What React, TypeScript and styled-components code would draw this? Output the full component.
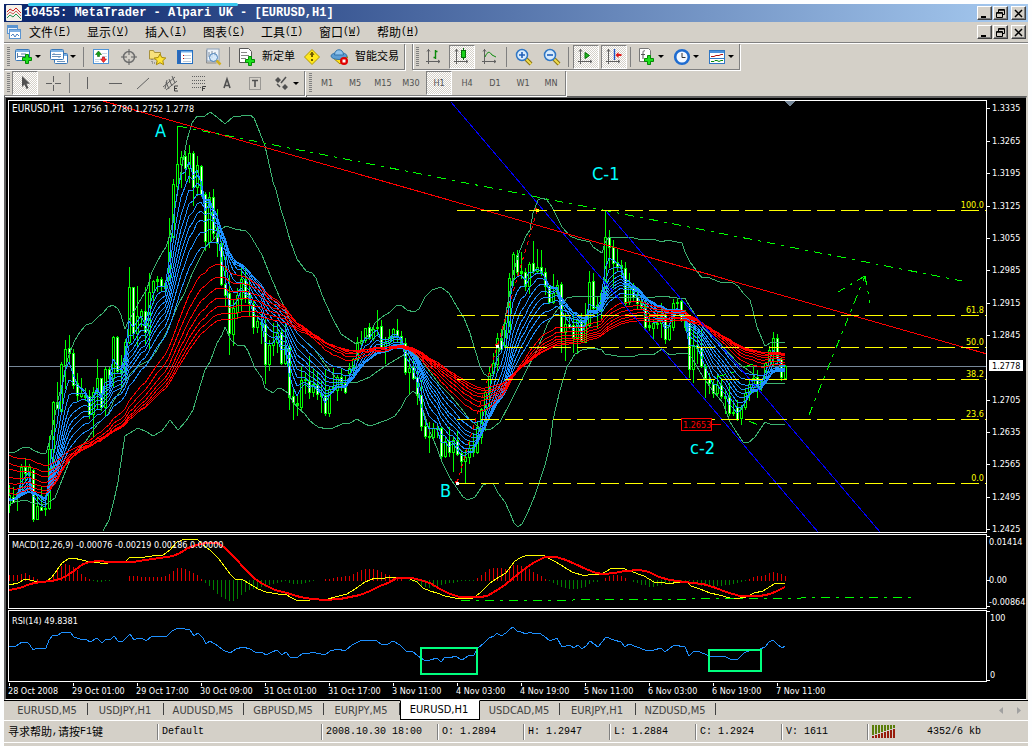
import React from "react";
import styled, { createGlobalStyle, css } from "styled-components";

const FACE = "#d4d0c8";
const SHADOW = "#808080";
const TAHOMA = `"DejaVu Sans Condensed", "DejaVu Sans", sans-serif`;
const SONG = `"Liberation Mono", "Noto Sans CJK SC", monospace`;
const HAN = `"Noto Sans CJK SC", sans-serif`;

const GlobalStyle = createGlobalStyle`
  * { box-sizing: border-box; }
  body { margin: 0; background: #fdfeff; }
  button { font: inherit; color: inherit; border: 0; padding: 0; background: none; }
`;

/* ---------- window furniture ---------- */

const Window = styled.div`
  display: flex;
  flex-direction: column;
  margin: 0 4px;
  padding-top: 4px;
`;

const Body = styled.div`
  background: ${FACE};
  padding-bottom: 3px;
`;

const TitleBar = styled.header`
  display: flex;
  align-items: center;
  height: 18px;
  padding: 0 2px;
  background: linear-gradient(to right, #0a246a, #a6caf0);
  color: #fff;
`;

const Title = styled.h1`
  flex: 1;
  margin: 0 0 0 2px;
  font: bold 12px/18px ${SONG};
  white-space: pre;
`;

const Highlight = styled.div`
  position: absolute;
  top: 3px;
  left: 28px;
  width: 210px;
  height: 3px;
  border-radius: 2px;
  background: #38c8ee;
`;

const MenuBar = styled.nav`
  display: flex;
  align-items: center;
  height: 20px;
  padding: 0 2px;
`;

const MenuList = styled.div`
  display: flex;
  flex: 1;
  gap: 16px;
  margin-left: 7px;
`;

const MenuItem = styled.button`
  display: flex;
  align-items: center;
  width: 42px;
  font: 12px/18px ${HAN};
  white-space: nowrap;
  span { font: 10px/18px ${SONG}; }
`;

const Controls = styled.div`
  display: flex;
  gap: 1px;
`;

const ControlButton = styled.button<{ $apart?: boolean }>`
  display: grid;
  place-items: center;
  width: 15px;
  height: 14px;
  margin-left: ${(p) => (p.$apart ? "2px" : "0")};
  background: ${FACE};
  border: 1px solid;
  border-color: #fff #404040 #404040 #fff;
  box-shadow: inset -1px -1px ${SHADOW};
  color: #000;
`;

/* ---------- toolbars ---------- */

const ToolRow = styled.div<{ $first?: boolean }>`
  display: flex;
  gap: 1px;
  height: ${(p) => (p.$first ? "28px" : "26px")};
  padding-top: 1px;
  ${(p) => p.$first && css`
    border-top: 1px solid ${SHADOW};
    box-shadow: inset 0 1px #fff;
  `}
`;

const ToolBar = styled.div<{ $inset?: boolean }>`
  display: flex;
  align-items: center;
  height: 100%;
  border-right: 1px solid ${SHADOW};
  border-bottom: 1px solid ${SHADOW};
  box-shadow: 1px 1px #fff;
  margin-left: ${(p) => (p.$inset ? "6px" : "0")};
  ${(p) => p.$inset && css`
    border-left: 1px solid ${SHADOW};
    box-shadow: 1px 1px #fff, inset 1px 0 #fff;
  `}
`;

const Grip = styled.i`
  width: 7px;
  height: 20px;
  padding: 0 1px 0 3px;
  background: repeating-linear-gradient(to bottom, ${SHADOW} 0 1px, ${FACE} 1px 2px) content-box;
`;

const Divider = styled.i`
  width: 6px;
  height: 20px;
  padding: 0 3px 0 2px;
  background: ${SHADOW} content-box;
`;

const ToolButton = styled.button<{ $pressed?: boolean }>`
  display: grid;
  place-items: center;
  width: 26px;
  height: 24px;
  margin: 0 1px;
  font: 9px/12px ${TAHOMA};
  color: #505050;
  border: 1px solid transparent;
  ${(p) => p.$pressed && css`
    border-color: ${SHADOW} #fff #fff ${SHADOW};
    background: repeating-conic-gradient(#fff 0 25%, ${FACE} 0 50%) 0 0 / 2px 2px;
  `}
`;

const DropButton = styled.button`
  display: flex;
  align-items: center;
  width: 35px;
  height: 24px;
  padding-left: 3px;
  &::after {
    content: "";
    margin-left: 1px;
    border: 3px solid transparent;
    border-top-color: #000;
    border-bottom: 0;
  }
`;

const TextButton = styled.button<{ $w: number }>`
  display: flex;
  align-items: center;
  gap: 5px;
  width: ${(p) => p.$w}px;
  height: 24px;
  padding-left: 4px;
  white-space: nowrap;
  span {
    padding-bottom: 3px;
    font: 11px/16px ${HAN};
  }
`;

/* ---------- chart ---------- */

const ChartWindow = styled.main`
  display: flex;
  flex-direction: column;
  gap: 1px;
  margin-right: 1px;
  padding: 2px 0 0 2px;
  border-top: 2px solid #606060;
  border-left: 2px solid #606060;
  border-right: 1px solid ${FACE};
  border-bottom: 1px solid #fff;
  background: #000;
`;

const Panel = styled.section`
  display: flex;
`;

const Plot = styled.div`
  flex: 1;
  min-width: 0;
  border: 1px solid #fff;
`;

const Drawing = styled.svg<{ $h: number }>`
  display: block;
  width: 100%;
  height: ${(p) => p.$h}px;
  font: 9px ${TAHOMA};
`;

const Axis = styled.svg<{ $h: number }>`
  flex: 0 0 39px;
  width: 39px;
  height: ${(p) => p.$h}px;
  font: 9px ${TAHOMA};
  overflow: visible;
`;

/* ---------- tabs and status ---------- */

const TabStrip = styled.div`
  display: flex;
  height: 20px;
  padding-left: 4px;
  border-top: 1px solid #000;
  font: 11px/16px ${TAHOMA};
  color: #404040;
`;

const Tab = styled.button<{ $w: number; $active?: boolean }>`
  flex: 0 0 ${(p) => p.$w}px;
  height: 19px;
  padding-right: 2px;
  text-align: center;
  background: linear-gradient(#404040, #404040) right 2px / 1px 12px no-repeat;
  ${(p) => p.$active && css`
    margin-top: -1px;
    height: 20px;
    color: #000;
    background: #fff;
    border: 1px solid #000;
    border-top-color: #fff;
  `}
`;

const TabArrows = styled.div`
  display: flex;
  gap: 10px;
  margin: 0 6px 0 auto;
  align-items: center;
`;

const StatusBar = styled.footer`
  display: flex;
  align-items: center;
  height: 23px;
  border-top: 1px solid #fff;
  border-bottom: 1px solid #fff;
  font: 10px/16px ${SONG};
  color: #000;
`;

const StatusCell = styled.div<{ $w?: number }>`
  display: flex;
  align-items: center;
  flex: ${(p) => (p.$w ? `0 0 ${p.$w}px` : "1")};
  height: 16px;
  padding-left: 4px;
  white-space: pre;
  & + & {
    border-left: 1px solid ${SHADOW};
    box-shadow: inset 1px 0 #fff;
  }
  span { font: 11px/14px ${HAN}; padding-bottom: 2px; }
  svg { margin-right: 31px; }
`;

/* ---------- data: vertical positions of every bar, top-down ---------- */
/* high, low, body top, body bottom, 1 = rising */

const STEP = 4;
const bars: number[][] = [
  [485,512,495,505,1],[487,502,497,502,0],[492,510,493,497,1],[464,493,467,492,1],[458,480,467,473,0],[464,476,467,475,1],
  [469,521,470,519,0],[497,519,506,519,1],[487,510,507,510,0],[495,515,508,509,1],[436,509,449,508,1],[401,468,402,449,1],
  [382,408,402,408,0],[362,412,364,411,1],[340,388,349,365,1],[335,361,348,353,0],[349,388,353,385,0],[373,401,383,395,0],
  [378,397,393,396,1],[388,400,395,397,0],[390,418,396,414,0],[387,437,392,414,1],[359,408,378,392,1],[378,410,378,407,0],
  [367,415,369,407,1],[367,388,369,378,0],[336,387,337,378,1],[336,372,337,371,0],[355,387,370,373,0],[339,382,342,372,1],
  [267,343,287,342,1],[287,338,287,333,0],[286,347,316,333,1],[309,326,311,316,1],[287,345,311,332,0],[273,348,292,332,1],
  [280,303,281,292,1],[276,291,279,281,1],[277,291,279,286,0],[280,292,283,288,0],[218,285,237,283,1],[179,238,184,237,1],
  [126,192,164,186,1],[151,187,157,164,1],[151,180,156,168,0],[145,182,153,168,1],[151,205,153,187,0],[156,195,165,187,1],
  [165,196,166,194,0],[192,250,194,241,0],[192,247,197,242,1],[189,237,197,233,0],[209,256,233,243,0],[241,285,243,284,0],
  [257,305,284,295,0],[275,354,293,333,0],[300,345,308,334,1],[288,318,295,312,1],[268,310,279,299,1],[267,302,279,298,0],
  [277,315,292,303,0],[300,333,304,327,0],[315,332,321,327,1],[314,343,322,324,0],[318,383,324,364,0],[340,370,345,364,1],
  [323,355,342,345,1],[323,352,332,342,1],[328,364,332,363,0],[323,364,347,363,1],[344,409,347,397,0],[387,419,396,402,0],
  [394,415,403,405,0],[367,409,380,407,1],[372,393,379,380,1],[356,398,380,392,0],[369,396,384,392,1],[371,399,384,394,0],
  [380,412,393,396,0],[370,415,395,413,0],[387,416,389,413,1],[368,392,387,389,1],[375,400,377,390,1],[368,390,377,383,0],
  [375,393,383,392,0],[363,374,368,373,1],[358,378,359,368,1],[337,362,342,359,1],[331,350,340,343,1],[328,342,328,340,1],
  [323,339,327,338,0],[326,340,329,338,1],[310,335,327,328,1],[320,348,326,347,0],[337,363,342,347,1],[329,345,337,342,1],
  [328,342,329,337,1],[319,342,330,337,0],[331,347,336,343,0],[338,374,343,372,0],[357,393,368,372,1],[358,379,367,378,0],
  [365,404,377,395,0],[380,430,395,426,0],[417,438,426,436,0],[422,452,436,437,0],[423,440,428,437,1],[424,437,428,429,0],
  [426,461,428,456,0],[437,457,441,456,1],[427,456,441,452,0],[437,471,440,452,1],[430,455,440,454,0],[450,472,453,461,0],
  [450,483,457,461,1],[440,463,448,457,1],[433,456,447,452,0],[422,453,427,452,1],[408,443,409,437,1],[390,430,392,409,1],
  [367,407,373,392,1],[353,376,363,373,1],[333,371,338,364,1],[329,351,338,349,0],[313,350,323,347,1],[273,332,278,330,1],
  [252,285,254,278,1],[250,275,255,272,0],[252,278,271,273,0],[268,290,272,286,0],[262,293,264,286,1],[241,273,263,271,0],
  [249,273,267,271,1],[250,275,267,272,0],[268,294,272,286,0],[285,303,286,302,0],[274,303,293,302,1],[280,295,285,293,1],
  [282,352,284,332,0],[313,360,324,332,1],[315,328,324,327,0],[313,352,325,338,0],[318,353,320,338,1],[313,342,321,341,0],
  [303,342,318,342,1],[271,326,282,325,1],[273,315,281,308,0],[297,327,305,310,0],[290,318,293,310,1],[211,295,237,293,1],
  [230,267,237,247,0],[240,287,247,263,0],[249,270,262,266,0],[260,277,265,268,0],[262,305,268,303,0],[273,304,285,302,1],
  [283,300,285,297,0],[287,308,297,303,0],[293,308,302,307,0],[297,328,306,327,0],[313,330,325,327,0],[320,338,323,328,1],
  [313,328,323,324,1],[303,337,315,323,1],[313,343,315,339,0],[323,340,325,339,1],[299,330,303,327,1],[298,313,302,303,1],
  [299,321,301,320,0],[310,330,317,327,0],[322,377,323,369,0],[327,382,346,369,1],[332,363,345,348,0],[330,367,347,366,0],
  [364,397,366,378,0],[373,393,379,383,0],[380,397,384,393,0],[373,395,385,393,1],[378,398,385,396,0],[390,413,396,398,0],
  [383,415,396,413,0],[400,415,412,413,1],[400,420,407,419,0],[405,424,407,418,1],[388,409,393,407,1],[378,400,384,393,1],
  [365,392,378,387,1],[370,397,377,387,0],[379,390,381,387,1],[362,383,363,382,1],[346,366,350,365,1],[332,365,338,350,1],
  [334,363,338,358,0],[357,380,359,377,0],[365,379,366,378,1],
];

const upperBand = "9,453 15,452 22,448 28,447 35,451 40,453 46,453 50,440 54,420 58,400 62,385 66,365 70,352 75,340 80,332 86,325 92,323 98,317 103,313 108,307 113,305 118,309 121,315 125,329 128,322 133,313 142,297 147,289 152,272 157,262 162,253 166,247 170,235 173,220 178,190 183,160 187,140 192,123 197,116 205,116 210,112 217,117 225,124 233,117 241,116 250,115 254,118 260,133 265,146 270,168 273,182 276,190 281,210 285,222 290,240 297,259 306,271 312,273 316,278 322,295 331,315 341,334 350,340 356,344 363,341 370,333 375,323 382,317 390,312 396,306 401,305 407,310 414,312 419,309 425,297 432,290 441,287 449,293 457,307 464,318 470,333 475,350 480,366 484,374 489,377 493,375 498,358 503,330 508,302 514,270 520,250 526,236 530,230 533,213 538,200 542,198 547,200 552,207 557,217 562,227 570,236 577,239 590,242 593,247 602,253 605,243 609,237 630,237 638,239 653,239 662,242 667,240 682,243 685,252 690,262 702,278 707,277 720,282 733,283 738,286 743,293 750,300 752,307 757,327 765,346 772,342 780,343 785,342";
const middleBand = "9,505 15,502 25,500 33,503 45,505 55,498 62,480 70,460 80,449 88,438 97,425 108,414 114,400 120,392 125,383 130,374 140,365 150,360 157,350 165,335 172,320 177,307 185,292 192,274 198,262 205,248 213,240 220,230 226,226 235,229 246,231 250,235 262,255 270,275 280,298 285,308 290,320 297,333 305,341 315,350 322,360 330,371 337,379 343,383 358,382 370,377 378,371 387,365 397,359 405,354 412,352 420,358 430,372 440,385 450,395 460,407 470,420 480,428 490,430 500,422 510,403 523,377 537,350 548,323 557,310 567,298 577,296 600,296 605,298 613,297 637,297 648,298 662,296 677,298 685,298 690,307 703,327 717,340 723,347 738,363 752,373 760,383 785,384";
const lowerBand = "103,531 109,520 114,500 118,482 122,455 125,436 138,428 147,432 153,436 162,431 170,420 178,430 186,421 193,410 198,393 205,370 210,362 217,343 222,335 225,327 231,340 237,345 244,345 248,351 255,368 262,378 265,388 273,393 278,388 282,389 288,393 293,402 298,408 305,414 310,421 318,427 327,429 333,428 342,424 350,423 357,419 365,424 370,426 387,420 395,416 401,408 406,398 413,391 418,395 423,410 430,432 437,448 442,462 450,478 463,497 468,500 475,497 483,485 488,483 493,483 498,493 505,502 510,513 514,523 518,527 522,524 528,512 535,495 540,480 545,465 550,445 553,420 560,390 567,367 575,354 582,350 593,348 602,350 605,354 617,356 633,357 640,354 653,355 662,349 670,355 682,353 687,353 692,358 703,377 713,391 723,403 730,422 737,433 743,442 748,443 755,437 765,422 772,425 785,424";

const macdLine = [9,585,18,583,25,579,30,580,38,582,47,581,52,577,57,570,62,563,68,559,73,558,82,560,90,562,100,563,108,563,115,562,125,562,129,558,145,557,152,556,163,555,170,550,177,542,185,539,192,539,198,540,203,545,210,550,218,558,225,567,230,574,235,579,243,580,250,584,258,589,266,592,278,594,285,594,292,598,298,601,310,600,328,599,335,597,347,594,355,589,365,582,375,578,385,578,400,577,410,579,417,582,423,588,430,591,437,593,445,596,455,598,465,598,473,598,480,593,490,583,496,579,506,573,511,566,515,561,520,558,527,555,543,555,550,559,556,562,564,567,572,572,585,576,591,574,599,575,605,572,612,568,622,568,630,571,644,576,654,582,665,583,670,584,677,582,688,583,691,586,700,589,710,593,719,595,730,598,740,598,746,597,754,593,763,591,774,584,785,583];
const signalLine = [9,590,20,588,30,584,40,582,52,581,60,579,68,575,75,570,83,564,90,562,98,561,110,562,133,562,145,560,160,558,173,556,180,553,188,548,200,544,207,543,218,543,225,548,235,558,245,569,255,579,263,584,275,590,287,593,300,597,312,599,325,600,340,599,350,597,360,595,370,591,380,586,388,583,397,578,412,578,420,580,430,583,440,589,450,594,460,597,480,597,487,596,494,592,505,585,513,578,522,571,533,563,545,557,556,557,566,560,575,564,586,569,596,573,603,574,615,573,624,571,640,570,649,572,659,577,670,580,684,582,703,584,716,588,726,592,740,596,760,596,770,594,777,591,785,587];
const rsiLine = "9,647 16,646 22,642 28,643 30,645 33,650 37,648 46,648 49,640 53,635 58,635 63,632 70,632 74,637 80,639 86,639 90,642 97,638 102,643 106,639 110,640 114,636 118,641 123,641 130,634 134,640 138,638 142,638 146,641 152,636 166,637 172,631 178,628 185,629 190,630 194,636 198,633 203,638 206,644 210,641 218,646 223,650 230,653 236,649 243,647 250,649 255,652 262,652 266,655 272,652 277,650 282,655 286,652 290,657 298,657 303,653 308,654 312,652 325,655 330,651 338,649 345,651 352,645 360,641 368,640 377,641 382,645 388,644 393,641 400,645 406,651 412,651 418,656 424,660 430,660 437,658 441,662 445,657 450,658 455,656 462,660 468,656 474,655 478,648 484,643 489,638 494,636 497,633 501,636 506,633 510,629 513,627 517,631 521,632 526,634 530,632 534,634 539,633 544,636 550,641 557,638 562,647 570,645 574,648 578,645 582,649 586,646 590,641 598,647 606,637 614,640 621,642 625,647 629,644 637,647 645,650 654,650 661,648 665,652 674,645 685,647 689,656 694,651 700,652 712,657 718,656 726,657 730,659 738,659 744,653 753,649 760,649 765,647 769,642 773,640 777,644 782,648 785,646";

const fast = [3, 5, 7, 9, 11, 13, 15, 18, 22];
const slow = [[30, 493], [35, 488], [40, 482], [45, 476], [50, 468], [55, 462], [60, 454]];

const LEFT = 9;

function ema(period: number, seed: number) {
  const k = 2 / (period + 1);
  let v = seed;
  return bars
    .map(([, , top, bottom, up], i) => {
      v += ((up ? top : bottom) - v) * k;
      return `${LEFT + i * STEP},${Math.round(v)}`;
    })
    .join(" ");
}

function levelAt(line: number[], x: number) {
  for (let i = 2; i < line.length; i += 2) {
    if (x <= line[i]) {
      const t = (x - line[i - 2]) / (line[i] - line[i - 2]);
      return line[i - 1] + (line[i + 1] - line[i - 1]) * t;
    }
  }
  return line[line.length - 1];
}

const toPoints = (line: number[]) =>
  line.reduce((s, v, i) => s + v + (i % 2 ? " " : ","), "").trim();

const fibs: [string, number][] = [["100.0", 210], ["61.8", 315], ["50.0", 347], ["38.2", 379], ["23.6", 419], ["0.0", 483]];
const prices: [string, number][] = [
  ["1.3335", 108], ["1.3265", 141], ["1.3195", 173], ["1.3125", 206], ["1.3055", 238], ["1.2985", 270], ["1.2915", 303],
  ["1.2845", 335], ["1.2705", 400], ["1.2635", 432], ["1.2565", 464], ["1.2495", 497], ["1.2425", 529],
];
const times = ["28 Oct 2008", "29 Oct 01:00", "29 Oct 17:00", "30 Oct 09:00", "31 Oct 01:00", "31 Oct 17:00", "3 Nov 11:00", "4 Nov 03:00", "4 Nov 19:00", "5 Nov 11:00", "6 Nov 03:00", "6 Nov 19:00", "7 Nov 11:00"];

const MAIN_TOP = 101;
const MACD_TOP = 535;
const RSI_TOP = 611;

function PriceChart() {
  return (
    <Panel aria-label="EURUSD,H1">
      <Plot>
        <Drawing $h={431} shapeRendering="crispEdges">
          <line x1="0" x2="100%" y1={366.5 - MAIN_TOP} y2={366.5 - MAIN_TOP} stroke="#778899" />
          <g transform={`translate(${-LEFT} ${-MAIN_TOP})`} fill="none">
            {bars.map(([h, l, t, b, up], i) => {
              const x = LEFT + i * STEP;
              return (
                <g key={i}>
                  <rect x={x} y={h} width="1" height={l - h + 1} fill="#0f0" />
                  <rect x={x - 1} y={t} width="3" height={Math.max(1, b - t + 1)} fill="#0f0" />
                  {b - t > 2 && <rect x={x} y={t + 1} width="1" height={b - t - 1} fill={up ? "#000" : "#fff"} />}
                </g>
              );
            })}
            <g stroke="#3cb371">
              <polyline points={upperBand} />
              <polyline points={middleBand} />
              <polyline points={lowerBand} />
            </g>
            {fast.map((p) => <polyline key={p} points={ema(p, 500)} stroke="#1e90ff" />)}
            {slow.map(([p, s]) => <polyline key={p} points={ema(p, s)} stroke="#f00" />)}
            <g stroke="#00f">
              <line x1="451" y1="102" x2="818" y2="532" />
              <line x1="606" y1="211" x2="880" y2="532" />
            </g>
            <line x1="103" y1="101" x2="987" y2="354" stroke="#f00" />
            <line x1="457" y1="483" x2="537" y2="211" stroke="#f00" strokeDasharray="4 4" />
            <g stroke="#0f0" strokeDasharray="9 6 3 6">
              <line x1="178" y1="126" x2="962" y2="281" />
              <line x1="809" y1="415" x2="865" y2="276" />
              <path d="M865 276 838 292M865 276 870 303" />
              <path d="M717 377 737 371M745 367 758 362M749 421 758 425" />
            </g>
          </g>
          {fibs.map(([name, y]) => (
            <g key={name}>
              <line x1={457 - LEFT} x2="100%" y1={y + 0.5 - MAIN_TOP} y2={y + 0.5 - MAIN_TOP} stroke="#ff0" strokeDasharray="18 6" />
              <text x="100%" dx="-2" y={y - 2 - MAIN_TOP} textAnchor="end" fill="#ff0">{name}</text>
            </g>
          ))}
          <g transform={`translate(${-LEFT} ${-MAIN_TOP})`}>
            {[[456, 482], [496, 345], [536, 209]].map(([x, y]) => (
              <g key={x}>
                <rect x={x - 1} y={y - 1} width="2" height="2" fill="#f00" />
                <rect x={x} y={y} width="3" height="3" fill={x === 536 ? "#ff0" : "#fff"} />
              </g>
            ))}
            <path d="M784 101h11l-5 5h-1z" fill="#778899" />
            <rect x="681.5" y="418.5" width="30" height="12" fill="#000" stroke="#f00" />
            <path d="M712 424.5h9" stroke="#f00" />
            <text x="683" y="428" fill="#f00">1.2653</text>
            <g fill="#0ff" fontSize="18">
              <text x="155" y="137">A</text>
              <text x="592" y="180">C-1</text>
              <text x="440" y="497">B</text>
              <text x="690" y="454">c-2</text>
            </g>
            <text x="12" y="112" fill="#fff"><tspan fontSize="10">EURUSD,H1</tspan><tspan dx="8">1.2756 1.2780 1.2752 1.2778</tspan></text>
          </g>
        </Drawing>
      </Plot>
      <Axis $h={433} fill="#fff">
        {prices.map(([p, y]) => (
          <g key={p}>
            <rect x="0" y={y - 100} width="3" height="1" />
            <text x="5" y={y - 97}>{p}</text>
          </g>
        ))}
        <rect x="2" y="260" width="34" height="11" />
        <text x="5" y="269" fill="#000">1.2778</text>
      </Axis>
    </Panel>
  );
}

function MacdChart() {
  return (
    <Panel aria-label="MACD">
      <Plot>
        <Drawing $h={73} shapeRendering="crispEdges">
          <g transform={`translate(${-LEFT} ${-MACD_TOP})`} fill="none">
            {bars.map((_, i) => {
              const x = LEFT + i * STEP;
              const gap = Math.round(levelAt(signalLine, x) - levelAt(macdLine, x));
              if (!gap) return null;
              return gap > 0
                ? <rect key={i} x={x} y={580 - gap} width="1" height={gap + 1} fill="#e00000" />
                : <rect key={i} x={x} y={580} width="1" height={-gap} fill="#008000" />;
            })}
            <polyline points={toPoints(macdLine)} stroke="#ff0" />
            <polyline points={toPoints(signalLine)} stroke="#f00" strokeWidth="2" />
            <line x1="461" y1="601" x2="915" y2="597" stroke="#0f0" strokeDasharray="9 6 3 6" />
            <text x="12" y="548" fill="#fff">MACD(12,26,9) -0.00076 -0.00219 0.00186 0.00000</text>
          </g>
        </Drawing>
      </Plot>
      <Axis $h={75} fill="#fff">
        <path d="M0 2h3v1h-3zM0 46h3v1h-3zM0 72h3v1h-3z" />
        <text x="2" y="11">0.01414</text>
        <text x="2" y="49">0.00</text>
        <text x="2" y="71">-0.00864</text>
      </Axis>
    </Panel>
  );
}

function RsiChart() {
  return (
    <Panel aria-label="RSI">
      <Plot>
        <Drawing $h={70} shapeRendering="crispEdges">
          <g transform={`translate(${-LEFT} ${-RSI_TOP})`} fill="none">
            <polyline points={rsiLine} stroke="#1e90ff" />
            <rect x="421" y="648" width="56" height="26" stroke="#00ff7f" strokeWidth="2" />
            <rect x="709" y="650" width="52" height="21" stroke="#00ff7f" strokeWidth="2" />
            <text x="12" y="624" fill="#fff">RSI(14) 49.8381</text>
          </g>
        </Drawing>
      </Plot>
      <Axis $h={72} fill="#fff">
        <path d="M0 1h3v1h-3zM0 70h3v1h-3z" />
        <text x="3" y="11">100</text>
        <text x="3" y="68">0</text>
      </Axis>
    </Panel>
  );
}

function TimeScale() {
  return (
    <Drawing $h={16} fill="#fff">
      {times.map((t, i) => (
        <g key={t}>
          <rect x={1 + i * 64} y="0" width="1" height="3" />
          <text x={i * 64} y="11">{t}</text>
        </g>
      ))}
    </Drawing>
  );
}

/* ---------- icons ---------- */

const Icon = ({ children, s = 20 }: { children: React.ReactNode; s?: number }) => (
  <svg width={s} height={s} viewBox={`0 0 ${s} ${s}`} fill="none" aria-hidden="true">{children}</svg>
);

const Plus = ({ x, y }: { x: number; y: number }) => (
  <path transform={`translate(${x} ${y})`} d="M3.5.5h3v3h3v3h-3v3h-3v-3h-3v-3h3z" fill="#1ce01c" stroke="#058a05" />
);

const Frame = ({ x, y, w, h }: { x: number; y: number; w: number; h: number }) => (
  <>
    <rect x={x + 0.5} y={y + 0.5} width={w} height={h} rx="1" fill="#fff" stroke="#3a78b8" />
    <path d={`M${x + 1} ${y + 2}h${w - 1}`} stroke="#7db2e4" strokeWidth="2" />
  </>
);

const AxisMark = () => <path d="M4.5 2v15M2 14.5h14M3 4.500l1.500-2 1.500 2M14 13l2 1.500-2 1.500" stroke="#606060" />;

const NewChart = () => <Icon><Frame x={1} y={2} w={14} h={11} /><path d="M3.5 6v5M3 9.500h9M7 7h5" stroke="#5b7fa8" /><Plus x={8} y={7} /></Icon>;
const Profiles = () => <Icon><Frame x={5} y={6} w={13} h={10} /><Frame x={1} y={2} w={13} h={10} /><path d="M3 7.500h9M3 9.500h9M5 6v2M10 9v2M8 14.500h8" stroke="#6f95bd" /></Icon>;
const MarketWatch = () => <Icon><rect x="2.500" y="2.500" width="15" height="14" fill="#fff" stroke="#4f94d8" /><path d="M11 6.500h5M11 9.500h5M4 12.500h5M4 14.500h4" stroke="#c9d6e4" /><path d="M7.500 4l3 3.500h-2v2h-2v-2h-2z" fill="#12a012" stroke="#06650a" strokeWidth=".6" /><path d="M12.500 15.500l-3-3.500h2v-2h2v2h2z" fill="#f33" stroke="#a00" strokeWidth=".6" /></Icon>;
const DataWindow = () => <Icon><circle cx="10" cy="10" r="5.500" stroke="#707070" strokeWidth="1.500" /><path d="M10 2v6M10 12v6M2 10h6M12 10h6" stroke="#606060" /></Icon>;
const Navigator = () => <Icon><path d="M2.500 12V3.500h4l1 2h6V12z" fill="#f7e07c" stroke="#a8923c" /><path d="M5 12v4h5" stroke="#666" strokeDasharray="1 1" /><path d="M13 7l1.800 3.500 4 .5-3 2.700.8 4-3.600-2-3.600 2 .8-4-3-2.700 4-.5z" fill="#ffe436" stroke="#a98a08" /></Icon>;
const Terminal = () => <Icon><rect x="2.500" y="3.500" width="15" height="13" fill="#fff" stroke="#246fc0" /><path d="M3 4h3v12H3z" fill="#2b66b8" /><path d="M6 4h11v1.500H6z" fill="#6eaae6" /><path d="M8 8.500h8M8 11.500h8M8 14.500h8" stroke="#bfcbd8" /><path d="M8 8.500h1M8 11.500h1" stroke="#c00" /></Icon>;
const Tester = () => <Icon><path d="M3.500 3v13h10" stroke="#8b8b8b" /><rect x="4" y="2" width="12" height="12" fill="#eef3f8" stroke="#8ba0b8" /><path d="M6 5v5M9 4v7M12 5v4" stroke="#7a8ca0" /><circle cx="10.500" cy="10.500" r="4" fill="#cfe6fa" fillOpacity=".8" stroke="#4a80b8" /><path d="M13.500 13.500l4 4" stroke="#d2b022" strokeWidth="2.500" /></Icon>;
const NewOrder = () => <Icon><path d="M2.500 1.500h9l3 3v11h-12z" fill="#fff" stroke="#555" /><path d="M4 5.500h6M4 8.500h8M4 11.500h5" stroke="#888" /><Plus x={8} y={9} /></Icon>;
const Diamond = () => <Icon><path d="M10 2.500l7.500 7.500-7.500 7.500L2.500 10z" fill="#ffe81e" stroke="#b39a00" /><path d="M10 5.500v4.500M10 12v2" stroke="#705c00" strokeWidth="2" /><path d="M8 8l2-3 2 3" stroke="#705c00" /></Icon>;
const Expert = () => <Icon><path d="M2 10l8 7 8-7z" fill="#ffe21a" stroke="#a68b00" /><ellipse cx="9" cy="9" rx="8" ry="3.500" fill="#5c9ed4" stroke="#3473a8" /><path d="M4.500 8c0-7 9-7 9 0z" fill="#8fc3ec" stroke="#3473a8" /><circle cx="14" cy="14" r="4" fill="#e00000" /><rect x="12.500" y="12.500" width="3" height="3" fill="#fff" /></Icon>;
const BarsIcon = () => <Icon><AxisMark /><path d="M11.500 3v9M11.500 4.500h2M9.500 10.500h2" stroke="#0a8a0a" strokeWidth="1.400" /></Icon>;
const CandleIcon = () => <Icon><AxisMark /><path d="M11.500 1v12" stroke="#067006" /><rect x="9.500" y="3.500" width="4" height="7" fill="#19d019" stroke="#067006" /></Icon>;
const LineIcon = () => <Icon><AxisMark /><path d="M5 10c3-7 5-5 7-2l4 2" stroke="#0a8a0a" /></Icon>;
const Zoom = ({ plus }: { plus?: boolean }) => <Icon><path d="M12 12l5 5" stroke="#8c7410" strokeWidth="4" /><path d="M12 12l5 5" stroke="#f0dc50" strokeWidth="2" /><circle cx="8" cy="8" r="5.500" fill="#d9ecfd" stroke="#2f76c4" strokeWidth="1.500" /><path d={plus ? "M5 8h6M8 5v6" : "M5 8h6"} stroke="#2060b8" strokeWidth="1.600" /></Icon>;
const AutoScroll = () => <Icon><AxisMark /><path d="M9 5.500v6l4.500-3z" fill="#1db81d" stroke="#067006" /></Icon>;
const ChartShift = () => <Icon><AxisMark /><path d="M10.500 2v11" stroke="#1c54c8" strokeWidth="1.400" /><path d="M11.500 8l3-3v2h3v2h-3v2z" fill="#e01818" /></Icon>;
const Indicators = () => <Icon><path d="M2.500 1.500h9l2 2v11h-11z" fill="#fff" stroke="#777" /><path d="M8 4c-2-1-2 1-2 3v5M4 7.500h4" stroke="#555" /><Plus x={7} y={8} /></Icon>;
const Clock = () => <Icon><circle cx="10" cy="10" r="6.800" fill="#f4f9ff" stroke="#1f6cd0" strokeWidth="2.600" /><path d="M10 6v4.500h3.500" stroke="#333" /></Icon>;
const Template = () => <Icon><rect x="2.500" y="3.500" width="15" height="13" fill="#fff" stroke="#2f76c4" /><path d="M3 5h14" stroke="#4a90dc" strokeWidth="2" /><path d="M3 11.500h14" stroke="#2f76c4" /><path d="M4 9.500h3l2-1h3l2-1h2" stroke="#b01010" /><path d="M4 14.500h3l1-1h2l2 1 2-1h2" stroke="#0a8a0a" /></Icon>;

const Pointer = () => <Icon><path d="M7 3v11l2.500-2.500 2 4.500 2-1-2-4.300H15z" fill="#505050" /></Icon>;
const stroke = "#606060";
const drawTools: [string, React.ReactNode][] = [
  ["Vertical line", <path key="a" d="M10.500 4v12" stroke={stroke} />],
  ["Horizontal line", <path key="a" d="M4 10.500h13" stroke={stroke} />],
  ["Trendline", <path key="a" d="M4 16L16 5" stroke={stroke} />],
  ["Channel", <g key="a"><path d="M2 14L14 4M5 17L16 8M5 9l3 7M8 6l3 7M11 3l3 7M6 7l-2 9" stroke={stroke} /><path d="M17 13h-3.500v5H17M13.500 15.500H16" stroke="#404040" /></g>],
  ["Fibonacci", <g key="a"><path d="M3 3.500h14M3 7.500h14M3 10.500h14M3 14.500h9" stroke={stroke} strokeDasharray="1 1" /><path d="M17 13.500h-3.500V18M13.500 15.500H16" stroke="#404040" /></g>],
];
const ObjectsIcon = () => <Icon><path d="M6 4l3 3-3 3-3-3zM13 11l3 3-3 3-3-3z" fill="#505050" /><path d="M5 11l3 3M9 10l5-6" stroke="#505050" strokeWidth="1.500" /></Icon>;

const AppIcon = () => <Icon s={16}><rect width="16" height="16" rx="1" fill="#f4f0e8" /><path d="M1 7l3-3 3 2 3-3 3 3 2 2" stroke="#d02020" /><path d="M1 10l3-3 3 2 3-3 3 3 2 2" stroke="#d06060" /><path d="M1 13l3-3 3 2 3-3 3 3 2 2" stroke="#209050" /></Icon>;
const DocIcon = () => <Icon s={16}><rect x="1.500" y="1.500" width="10" height="8" fill="#e8f2fc" stroke="#5a94d0" /><path d="M2 3h9" stroke="#5a94d0" strokeWidth="2" /><rect x="3.500" y="5.500" width="11" height="9" fill="#fff" stroke="#5a94d0" /><path d="M4 7h10" stroke="#7eb0e4" strokeWidth="2" /><path d="M5 12l2-2 2 3 2-3 2 2" stroke="#4a80c0" /></Icon>;

function WindowControls() {
  return (
    <Controls>
      <ControlButton aria-label="Minimize"><Icon s={9}><path d="M1 7h5v2H1z" fill="#000" /></Icon></ControlButton>
      <ControlButton aria-label="Restore"><Icon s={9}><path d="M3 1h5M1 4h5" stroke="#000" strokeWidth="1.500" /><path d="M2.500 3V.5h6v5H7M.5 3.500h6v5h-6z" stroke="#000" /></Icon></ControlButton>
      <ControlButton aria-label="Close" $apart><Icon s={9}><path d="M1 1l7 7M8 1L1 8" stroke="#000" strokeWidth="1.500" /></Icon></ControlButton>
    </Controls>
  );
}

const menus: [string, string][] = [["文件", "F"], ["显示", "V"], ["插入", "I"], ["图表", "C"], ["工具", "T"], ["窗口", "W"], ["帮助", "H"]];
const frames = ["M1", "M5", "M15", "M30", "H1", "H4", "D1", "W1", "MN"];
const tabs: [string, number][] = [["EURUSD,M5", 80], ["USDJPY,H1", 76], ["AUDUSD,M5", 80], ["GBPUSD,M5", 80], ["EURJPY,M5", 76], ["EURUSD,H1", 80], ["USDCAD,M5", 80], ["EURJPY,H1", 76], ["NZDUSD,M5", 80]];

export default function App() {
  return (
    <>
      <GlobalStyle />
      <Window>
        <Body>
          <TitleBar>
            <AppIcon />
            <Title>10455: MetaTrader - Alpari UK - [EURUSD,H1]</Title>
            <WindowControls />
          </TitleBar>
          <Highlight />
          <MenuBar>
            <DocIcon />
            <MenuList>
              {menus.map(([name, key]) => (
                <MenuItem key={key}>{name}<span>(<u>{key}</u>)</span></MenuItem>
              ))}
            </MenuList>
            <WindowControls />
          </MenuBar>

          <ToolRow $first>
            <ToolBar>
              <Grip />
              <DropButton aria-label="New chart"><NewChart /></DropButton>
              <DropButton aria-label="Profiles"><Profiles /></DropButton>
              <Divider />
              <ToolButton aria-label="Market watch"><MarketWatch /></ToolButton>
              <ToolButton aria-label="Data window"><DataWindow /></ToolButton>
              <ToolButton aria-label="Navigator"><Navigator /></ToolButton>
              <ToolButton aria-label="Terminal"><Terminal /></ToolButton>
              <ToolButton aria-label="Strategy tester"><Tester /></ToolButton>
              <Divider />
              <TextButton $w={65}><NewOrder /><span>新定单</span></TextButton>
              <ToolButton aria-label="Editor"><Diamond /></ToolButton>
              <TextButton $w={78}><Expert /><span>智能交易</span></TextButton>
            </ToolBar>
            <ToolBar $inset>
              <Grip />
              <ToolButton aria-label="Bar chart"><BarsIcon /></ToolButton>
              <ToolButton aria-label="Candlesticks" $pressed><CandleIcon /></ToolButton>
              <ToolButton aria-label="Line chart"><LineIcon /></ToolButton>
              <Divider />
              <ToolButton aria-label="Zoom in"><Zoom plus /></ToolButton>
              <ToolButton aria-label="Zoom out"><Zoom /></ToolButton>
              <Divider />
              <ToolButton aria-label="Auto scroll" $pressed><AutoScroll /></ToolButton>
              <ToolButton aria-label="Chart shift" $pressed><ChartShift /></ToolButton>
              <Divider />
              <DropButton aria-label="Indicators"><Indicators /></DropButton>
              <DropButton aria-label="Periods"><Clock /></DropButton>
              <DropButton aria-label="Templates"><Template /></DropButton>
            </ToolBar>
          </ToolRow>

          <ToolRow>
            <ToolBar>
              <Grip />
              <ToolButton aria-label="Cursor" $pressed><Pointer /></ToolButton>
              <ToolButton aria-label="Crosshair"><Icon><path d="M10.500 3v6M10.500 12v6M3 10.500h6M12 10.500h6" stroke={stroke} /></Icon></ToolButton>
              <Divider />
              {drawTools.map(([name, art]) => (
                <ToolButton key={name} aria-label={name}><Icon>{art}</Icon></ToolButton>
              ))}
              <ToolButton aria-label="Text"><Icon><path d="M7 15l3-9 3 9M8 12.500h4" stroke="#505050" strokeWidth="1.600" /></Icon></ToolButton>
              <ToolButton aria-label="Text label"><Icon><rect x="4.500" y="4.500" width="11" height="12" stroke={stroke} strokeDasharray="1 1" /><path d="M7 7.500h6M10 7v7" stroke="#505050" strokeWidth="1.600" /></Icon></ToolButton>
              <DropButton aria-label="Arrows"><ObjectsIcon /></DropButton>
            </ToolBar>
            <ToolBar>
              <Grip />
              {frames.map((f) => <ToolButton key={f} $pressed={f === "H1"}>{f}</ToolButton>)}
            </ToolBar>
          </ToolRow>

          <ChartWindow>
            <PriceChart />
            <MacdChart />
            <RsiChart />
            <TimeScale />
          </ChartWindow>

          <TabStrip role="tablist">
            {tabs.map(([name, w]) => (
              <Tab key={name} role="tab" aria-selected={name === "EURUSD,H1"} $w={w} $active={name === "EURUSD,H1"}>{name}</Tab>
            ))}
            <TabArrows aria-hidden="true">
              <Icon s={7}><path d="M5 0v7L1 3.500z" fill="#a0a0a0" /></Icon>
              <Icon s={7}><path d="M2 0v7l4-3.500z" fill="#a0a0a0" /></Icon>
            </TabArrows>
          </TabStrip>

          <StatusBar>
            <StatusCell $w={153}><span>寻求帮助</span>,<span>请按</span>F1<span>键</span></StatusCell>
            <StatusCell $w={164}>Default</StatusCell>
            <StatusCell $w={116}>2008.10.30 18:00</StatusCell>
            <StatusCell $w={86}>O: 1.2894</StatusCell>
            <StatusCell $w={86}>H: 1.2947</StatusCell>
            <StatusCell $w={86}>L: 1.2884</StatusCell>
            <StatusCell $w={86}>C: 1.2924</StatusCell>
            <StatusCell $w={86}>V: 1611</StatusCell>
            <StatusCell>
              <svg width="24" height="13" viewBox="0 0 24 13" aria-hidden="true">
                {[0, 1, 2, 3, 4, 5, 6, 7].map((i) => (
                  <g key={i}>
                    <rect x={i * 3} y="0" width="2" height={10 - i} fill="#5a7d0a" />
                    <rect x={i * 3} y={11 - i} width="2" height={2 + i} fill="#981c0c" />
                  </g>
                ))}
              </svg>
              4352/6 kb
            </StatusCell>
          </StatusBar>
        </Body>
      </Window>
    </>
  );
}
